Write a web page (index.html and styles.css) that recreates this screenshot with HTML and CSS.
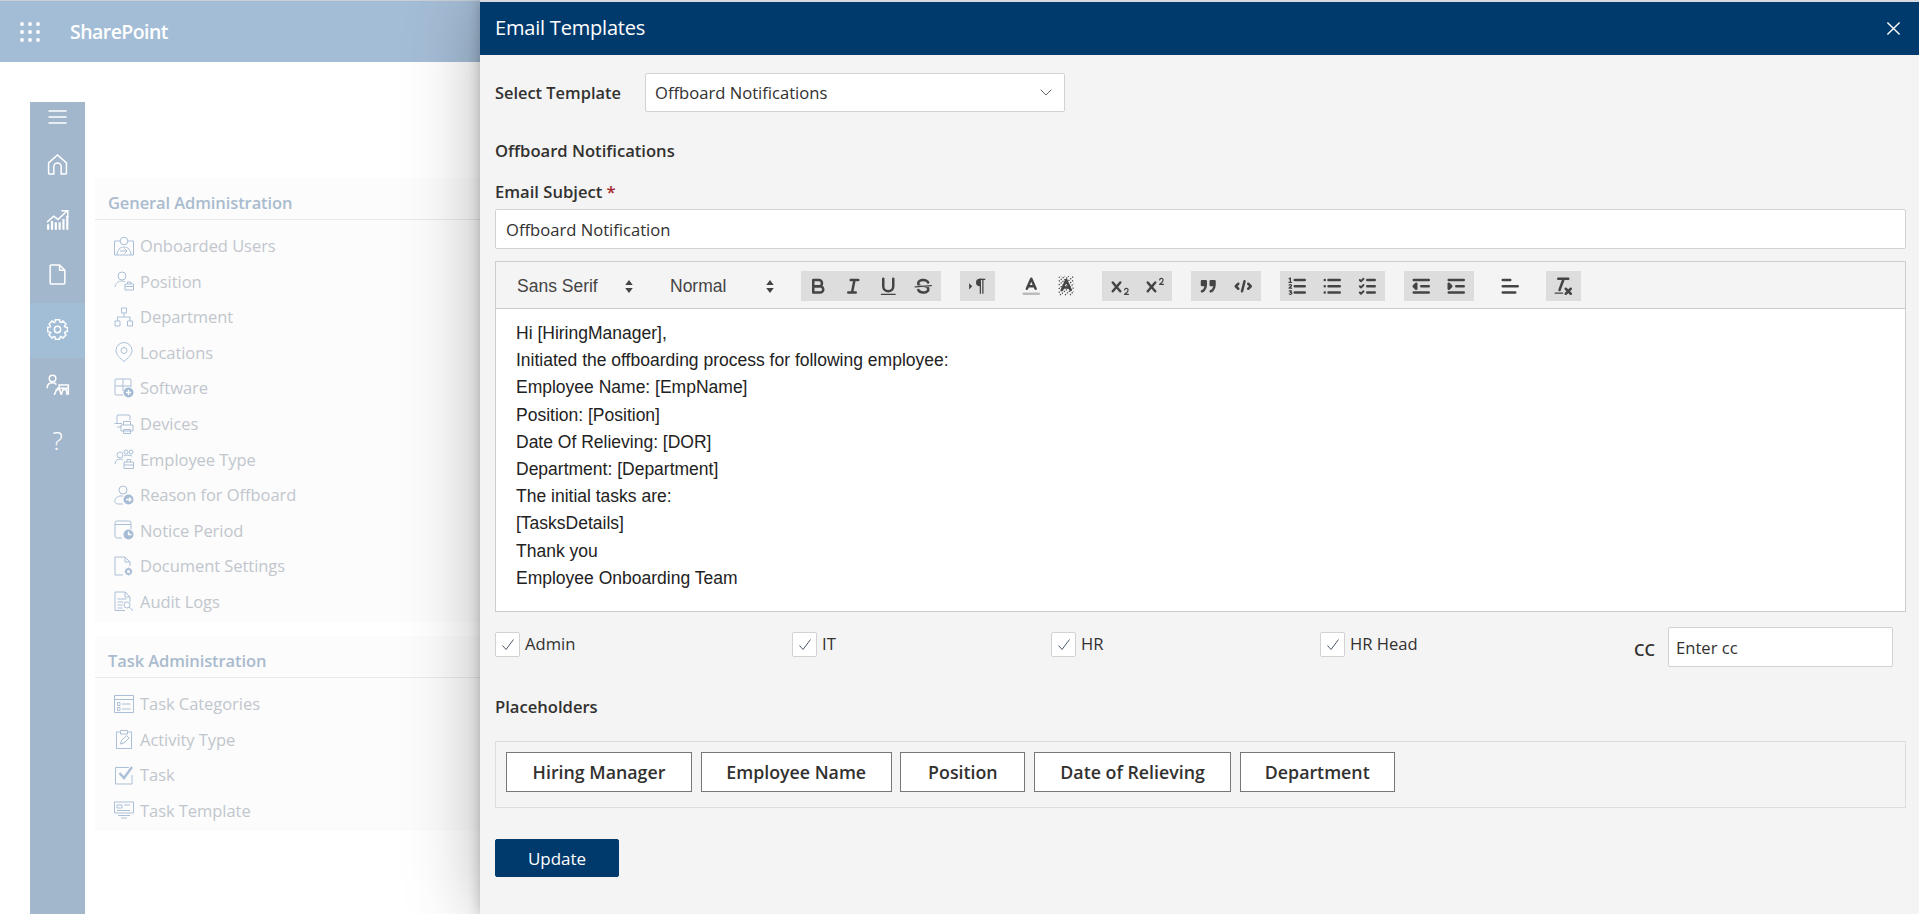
FILE: index.html
```html
<!DOCTYPE html>
<html lang="en">
<head>
    <meta charset="UTF-8">
    <title>Email Templates</title>
    <link rel="stylesheet" href="styles.css">
</head>
<body>
    <header id="topbar">
        <svg class="waffle" viewBox="0 0 20 20"><g fill="#fff"><circle cx="2" cy="2" r="1.9"/><circle cx="10" cy="2" r="1.9"/><circle cx="18" cy="2" r="1.9"/><circle cx="2" cy="10" r="1.9"/><circle cx="10" cy="10" r="1.9"/><circle cx="18" cy="10" r="1.9"/><circle cx="2" cy="18" r="1.9"/><circle cx="10" cy="18" r="1.9"/><circle cx="18" cy="18" r="1.9"/></g></svg>
        <span class="brand">SharePoint</span>
    </header>

    <div id="page">
        <!-- Barra lateral -->
        <nav id="sidebar">
            <div class="side-toggle"><svg viewBox="0 0 20 14"><path d="M1 1h18M1 7h18M1 13h18"/></svg></div>
            <a class="side-item"><svg viewBox="0 0 20 20"><path d="M1.500 18V8.500L10 1l8.500 7.500V18a1 1 0 0 1-1 1h-4V12a3.500 3.500 0 0 0-7 0v7h-4a1 1 0 0 1-1-1z"/></svg></a>
            <a class="side-item"><svg class="wide" viewBox="0 0 22 20"><path d="M1 12l6-5.500 4 3 8-7.500M14 1.500h6v6"/><path class="bars" d="M2 19v-5M5.500 19v-8M9 19v-7M12.500 19v-7M16 19V9M19.500 19V6"/></svg></a>
            <a class="side-item"><svg viewBox="0 0 20 20"><path d="M3 2a1 1 0 0 1 1-1h8l5 5v12a1 1 0 0 1-1 1H4a1 1 0 0 1-1-1zM12 1v5h5"/></svg></a>
            <a class="side-item active"><svg viewBox="0 0 20 20"><circle cx="10" cy="10" r="3"/><path d="M7.540 3.230 8 .610h4l.46 2.620A7.200 7.200 0 0 1 13.040 3.470"/><path transform="rotate(45 10 10)" d="M7.540 3.230 8 .610h4l.46 2.620A7.200 7.200 0 0 1 13.040 3.470"/><path transform="rotate(90 10 10)" d="M7.540 3.230 8 .610h4l.46 2.620A7.200 7.200 0 0 1 13.040 3.470"/><path transform="rotate(135 10 10)" d="M7.540 3.230 8 .610h4l.46 2.620A7.200 7.200 0 0 1 13.040 3.470"/><path transform="rotate(180 10 10)" d="M7.540 3.230 8 .610h4l.46 2.620A7.200 7.200 0 0 1 13.040 3.470"/><path transform="rotate(225 10 10)" d="M7.540 3.230 8 .610h4l.46 2.620A7.200 7.200 0 0 1 13.040 3.470"/><path transform="rotate(270 10 10)" d="M7.540 3.230 8 .610h4l.46 2.620A7.200 7.200 0 0 1 13.040 3.470"/><path transform="rotate(315 10 10)" d="M7.540 3.230 8 .610h4l.46 2.620A7.200 7.200 0 0 1 13.040 3.470"/></svg></a>
            <a class="side-item"><svg class="wide" viewBox="0 0 22 20"><circle cx="6" cy="4" r="3"/><path d="M1 13c0-3 2-5 5-5 1.500 0 2.500.5 3.500 1.500"/><path d="M7.500 19l1.500-3a2 2 0 0 1 4 0l1 3M14 19l1-3a2 2 0 0 1 4 0v3M10 13h10.500v6M12 13V10h8.500v3"/></svg></a>
            <a class="side-item help">?</a>
        </nav>

        <main id="admin">
            <section class="admin-card">
                <h3>General Administration</h3>
                <ul>
                    <li><svg viewBox="0 0 20 20"><path d="M6 5H.5v14h19V5H14M3 19c0-5 3-8 7-8s7 3 7 8"/><circle cx="10" cy="5" r="3.800"/><path d="M6 15h7m-2.500-2.500L13 15l-2.500 2.500"/></svg>Onboarded Users</li>
                    <li><svg viewBox="0 0 20 20"><circle cx="8" cy="5" r="4"/><path d="M1 16c1-4 3-6 7-6 1 0 2 .2 3 .7"/><path d="M11 13h8.500v6H11zM11 15.500h8.500M13.500 13v-2h3.500v2"/></svg>Position</li>
                    <li><svg viewBox="0 0 20 20"><path d="M7.500 1h5v5h-5zM1 14h5v5H1zM13.500 14h5v5h-5zM10 6v4M3.500 14v-4h12.500v4"/></svg>Department</li>
                    <li><svg viewBox="0 0 20 20"><path d="M10 19.500C6 16 2 13 2 8.500a8 8 0 0 1 16 0c0 4.500-4 7.500-8 11z"/><circle cx="10" cy="8.500" r="3"/></svg>Locations</li>
                    <li><svg viewBox="0 0 20 20"><path d="M9 17H2a1 1 0 0 1-1-1V2a1 1 0 0 1 1-1h14a1 1 0 0 1 1 1v7M1 8h16M9 1v12"/><circle class="solid" cx="14.500" cy="14.500" r="5"/><path class="cut" d="M14.500 12v5M12 14.500h5"/></svg>Software</li>
                    <li><svg viewBox="0 0 20 20"><path d="M3 10V2a1 1 0 0 1 1-1h11a1 1 0 0 1 1 1v4M.5 9.500H8M7 13H3M7 11h12v6H7zM9.500 11V7.500h7V11M9.500 15.500h7v4h-7z"/></svg>Devices</li>
                    <li><svg viewBox="0 0 20 20"><circle cx="6" cy="6" r="3"/><circle cx="12" cy="3" r="2"/><circle cx="17" cy="3" r="2"/><path d="M1 15c0-3 2-5 5-5 1 0 2 .3 3 1M10 7c1-1 6-1 8 0M10 13h9.500v6.500H10zM10 16h9.500M13 13v-2.500h3.500V13"/></svg>Employee Type</li>
                    <li><svg viewBox="0 0 20 20"><circle cx="9" cy="5" r="4"/><path d="M9 19H4c-5 0-4-7 2-8h3"/><circle class="solid" cx="14.500" cy="14.500" r="5"/><path class="cut" d="M12 14.500h5m-2-2 2 2-2 2"/></svg>Reason for Offboard</li>
                    <li><svg viewBox="0 0 20 20"><path d="M8 18H3a2 2 0 0 1-2-2V3a2 2 0 0 1 2-2h12a2 2 0 0 1 2 2v6M1 4.500h16"/><circle class="solid" cx="14.500" cy="14.500" r="5"/><path class="cut" d="M14.500 11.500v3h3"/></svg>Notice Period</li>
                    <li><svg viewBox="0 0 20 20"><path d="M9 19H1V1h10l5 5v4M11 1v5h5"/><circle cx="14.500" cy="15.500" r="2.500" stroke-width="2"/><path d="M14.500 11.500v1.500M14.500 18v1.500M10.500 15.500H12M17 15.500h1.500"/></svg>Document Settings</li>
                    <li><svg viewBox="0 0 20 20"><path d="M11 19.500H1V1h10l5 5v5M11 1v5h5M3.500 8h9M3.500 11h6M3.500 14h5M3.500 17h5"/><circle cx="13" cy="14" r="3"/><path d="M15.200 16.200l4 3.500"/></svg>Audit Logs</li>
                </ul>
            </section>

            <section class="admin-card second">
                <h3>Task Administration</h3>
                <ul>
                    <li><svg viewBox="0 0 20 20"><path d="M.5 1.500h19v17H.5zM.5 5.500h19M8 10h8.500M8 15h8.500M3.500 8.500h2.500v3H3.500zM3.500 13.500h2.500v3H3.500z"/></svg>Task Categories</li>
                    <li><svg viewBox="0 0 20 20"><path d="M6 3H2.500v16.500h15V3H14M6.500 1.500h7V5h-7zM6.500 15l1-3.500 5-5 2.500 2.500-5 5z"/></svg>Activity Type</li>
                    <li><svg viewBox="0 0 20 20"><path d="M18 10v9H1.500V2.500H15"/><path d="M5.500 8l4.500 5 8-11" stroke-width="2.400"/></svg>Task</li>
                    <li><svg viewBox="0 0 20 20"><path d="M.5 2h19v11H.5zM3 5h5v3H3zM10 5h6M3 10.500h13M4 15.500h12M7 18h6"/></svg>Task Template</li>
                </ul>
            </section>
        </main>
    </div>

    <!-- Panel de plantillas -->
    <aside id="panel">
        <div id="panelHeader">
            <h2>Email Templates</h2>
            <svg class="close" viewBox="0 0 16 16"><path d="M1.500 1.500l13 13M14.500 1.500l-13 13"/></svg>
        </div>

        <div id="panelBody">
            <div class="template-row">
                <label>Select Template</label>
                <div class="select">Offboard Notifications
                    <svg viewBox="0 0 12 7"><path d="M.7.7L6 6 11.300.7"/></svg>
                </div>
            </div>

            <h4 class="template-name">Offboard Notifications</h4>

            <label class="subject-label">Email Subject <span class="required">*</span></label>
            <input class="field" type="text" value="Offboard Notification">

            <div id="editor">
                <div id="toolbar">
                    <div class="picker first">Sans Serif<svg viewBox="0 0 10 16"><path d="M5 1l4 5.500H1zM5 15l4-5.500H1z"/></svg></div>
                    <div class="picker second">Normal<svg viewBox="0 0 10 16"><path d="M5 1l4 5.500H1zM5 15l4-5.500H1z"/></svg></div>

                    <div class="tool-group shaded">
                        <button><svg viewBox="0 0 18 18"><path d="M5,4H9.500A2.500,2.500,0,0,1,12,6.500v0A2.500,2.500,0,0,1,9.500,9H5V4Z"/><path d="M5,9h5.500A2.500,2.500,0,0,1,13,11.500v0A2.500,2.500,0,0,1,10.500,14H5V9Z"/></svg></button>
                        <button><svg viewBox="0 0 18 18"><path d="M7 4h6M5 14h6M8 14l2-10"/></svg></button>
                        <button><svg viewBox="0 0 18 18"><path d="M5,3V9a4.012,4.012,0,0,0,4,4H9a4.012,4.012,0,0,0,4-4V3"/><rect class="fill" height="1" rx=".5" width="12" x="3" y="15"/></svg></button>
                        <button><svg viewBox="0 0 18 18"><path class="thin" d="M15.500 8.500l-13 1"/><path class="fill" d="M9.007,8C6.542,7.791,6,7.519,6,6.500,6,5.792,7.283,5,9,5c1.571,0,2.765.679,2.969,1.309a1,1,0,0,0,1.900-.617C13.356,4.106,11.354,3,9,3,6.200,3,4,4.538,4,6.500a3.200,3.200,0,0,0,.5,1.843Z"/><path class="fill" d="M8.984,10C11.457,10.208,12,10.479,12,11.500c0,.708-1.283,1.500-3,1.500-1.571,0-2.765-.679-2.969-1.309a1,1,0,1,0-1.900.617C4.644,13.894,6.646,15,9,15c2.800,0,5-1.538,5-3.500a3.200,3.200,0,0,0-.5-1.843Z"/></svg></button>
                    </div>
                    <div class="tool-group shaded">
                        <button><svg viewBox="0 0 18 18"><path class="fill" d="M2.500 11.500l2.500-2.500-2.500-2.500zM11,3a3,3,0,0,0,0,6h1V3H11Z"/><rect class="fill" height="12" width="1" x="11" y="3"/><rect class="fill" height="12" width="1" x="13" y="3"/><path class="thin" d="M11 3.500h4"/></svg></button>
                    </div>
                    <div class="tool-group">
                        <button><svg viewBox="0 0 18 18"><path d="M3 15h12" stroke="#bbb"/><path d="M5.500 11L9 3l3.500 8M11.630 9H6.380"/></svg></button>
                        <button><svg viewBox="0 0 18 18"><path class="hatch" d="M3 2l2-1M3 5l5-4M3 8l8-7M3 11l12-10M3 14l12-10M4 16l11-9M8 16l7-6M12 16l3-3"/><path d="M5.500 12L9 4l3.500 8M11.630 10H6.380"/></svg></button>
                    </div>
                    <div class="tool-group shaded">
                        <button><svg viewBox="0 0 18 18"><path class="fill" d="M15.500,15H13.861a3.858,3.858,0,0,0,1.914-2.975,1.800,1.800,0,0,0-1.600-1.751A1.921,1.921,0,0,0,12.021,11.700a.5,.5,0,1,0,.957.291,.914,.914,0,0,1,1.053-.725,.81,.81,0,0,1,.744.762c0,1.076-1.170,1.870-1.940,2.431A1.456,1.456,0,0,0,12,15.500a.5,.5,0,0,0,.5.5h3A.5,.5,0,0,0,15.500,15Z"/><path class="fill" d="M9.650,5.241a1,1,0,0,0-1.409.108L6,7.964,3.759,5.349A1,1,0,0,0,2.241,6.649L4.684,9.500,2.241,12.350A1,1,0,0,0,3.759,13.650L6,11.036,8.241,13.650a1,1,0,1,0,1.518-1.300L7.316,9.500,9.759,6.651A1,1,0,0,0,9.650,5.241Z"/></svg></button>
                        <button><svg viewBox="0 0 18 18"><path class="fill" d="M15.500,7H13.861a4.015,4.015,0,0,0,1.914-2.975,1.800,1.800,0,0,0-1.600-1.751A1.922,1.922,0,0,0,12.021,3.700a.5,.5,0,1,0,.957.291,.917,.917,0,0,1,1.053-.725,.81,.81,0,0,1,.744.762c0,1.077-1.164,1.925-1.934,2.486A1.423,1.423,0,0,0,12,7.500a.5,.5,0,0,0,.5.5h3A.5,.5,0,0,0,15.500,7Z"/><path class="fill" d="M9.651,5.241a1,1,0,0,0-1.410.108L6,7.964,3.759,5.349a1,1,0,1,0-1.519,1.300L4.683,9.500,2.241,12.350a1,1,0,1,0,1.519,1.300L6,11.036,8.241,13.650a1,1,0,0,0,1.519-1.300L7.317,9.500,9.759,6.651A1,1,0,0,0,9.651,5.241Z"/></svg></button>
                    </div>
                    <div class="tool-group shaded">
                        <button><svg viewBox="0 0 18 18"><rect class="fill" height="3" width="3" x="4" y="5"/><rect class="fill" height="3" width="3" x="11" y="5"/><path d="M4 5h3v3H4zM11 5h3v3h-3zM7,8c0,4.031-3,5-3,5M14,8c0,4.031-3,5-3,5"/></svg></button>
                        <button><svg viewBox="0 0 18 18"><path d="M5 7L3 9l2 2M13 7l2 2-2 2M10 5L8 13"/></svg></button>
                    </div>
                    <div class="tool-group shaded">
                        <button><svg viewBox="0 0 18 18"><path d="M7 4h8M7 9h8M7 14h8"/><path class="thin" d="M2.500 3l1-.6v3.400M2.400 5.900h2M2.500 8c.6-.6 2-.4 1.900.5 0 .7-1.900 1.300-1.900 2h2M2.600 12.600h1.800l-1 1.200c1 0 1.400.4 1.200 1-.2.700-1.400.8-2 .3"/></svg></button>
                        <button><svg viewBox="0 0 18 18"><path d="M6 4h9M6 9h9M6 14h9M3 4h0M3 9h0M3 14h0"/></svg></button>
                        <button><svg viewBox="0 0 18 18"><path d="M9 4h6M9 9h6M9 14h6"/><path class="thin2" d="M3 4l1 1 2-2M3 9l1 1 2-2M3 14l1 1 2-2"/></svg></button>
                    </div>
                    <div class="tool-group shaded">
                        <button><svg viewBox="0 0 18 18"><path d="M3 14h12M3 4h12M9 9h6"/><path class="fill" d="M5 7v4L3 9z"/><path d="M5 7v4L3 9z"/></svg></button>
                        <button><svg viewBox="0 0 18 18"><path d="M3 14h12M3 4h12M9 9h6"/><path d="M3 7v4l2-2z"/><path class="fill" d="M3 7v4l2-2z"/></svg></button>
                    </div>
                    <div class="tool-group">
                        <button><svg viewBox="0 0 18 18"><path d="M3 9h12M3 14h10M3 4h6"/></svg></button>
                    </div>
                    <div class="tool-group shaded">
                        <button><svg viewBox="0 0 18 18"><path d="M5 3h8M6 12l3.350-9M11 11l4 4M15 11l-4 4"/><rect class="fill" height="1" rx=".5" width="7" x="2" y="14"/></svg></button>
                    </div>
                </div>
                <div id="content">
                    <p>Hi [HiringManager],</p>
                    <p>Initiated the offboarding process for following employee:</p>
                    <p>Employee Name: [EmpName]</p>
                    <p>Position: [Position]</p>
                    <p>Date Of Relieving: [DOR]</p>
                    <p>Department: [Department]</p>
                    <p>The initial tasks are:</p>
                    <p>[TasksDetails]</p>
                    <p>Thank you</p>
                    <p>Employee Onboarding Team</p>
                </div>
            </div>

            <div id="recipients">
                <div class="check"><span class="box"><svg viewBox="0 0 14 14"><path d="M1.500 7.500l3.500 4L12.500 1.500"/></svg></span>Admin</div>
                <div class="check"><span class="box"><svg viewBox="0 0 14 14"><path d="M1.500 7.500l3.500 4L12.500 1.500"/></svg></span>IT</div>
                <div class="check"><span class="box"><svg viewBox="0 0 14 14"><path d="M1.500 7.500l3.500 4L12.500 1.500"/></svg></span>HR</div>
                <div class="check"><span class="box"><svg viewBox="0 0 14 14"><path d="M1.500 7.500l3.500 4L12.500 1.500"/></svg></span>HR Head</div>
                <div class="cc">
                    <label>CC</label>
                    <input class="cc-input" type="text" value="Enter cc">
                </div>
            </div>

            <h4 class="placeholders-title">Placeholders</h4>
            <div id="placeholders">
                <button class="chip chip-1">Hiring Manager</button>
                <button class="chip chip-2">Employee Name</button>
                <button class="chip chip-3">Position</button>
                <button class="chip chip-4">Date of Relieving</button>
                <button class="chip chip-5">Department</button>
            </div>

            <button id="updateBtn">Update</button>
        </div>
    </aside>
</body>
</html>
```

FILE: styles.css
```css
body {
    margin: 0;
    height: 914px;
    overflow: hidden;
    position: relative;
    background-color: #ffffff;
    font-family: "Open Sans", "Noto Sans", sans-serif;
}

/* Barra superior */
#topbar {
    height: 61px;
    border-top: 1px solid #c9d0d8;
    background-color: #a4bdd6;
    display: flex;
    align-items: center;
    color: #ffffff;
}

.waffle {
    width: 20px;
    height: 20px;
    margin-left: 20px;
}

.brand {
    margin-left: 30px;
    font-size: 19.500px;
    font-weight: 600;
    letter-spacing: -0.55px;
}

#page {
    display: flex;
    height: 852px;
    padding-left: 30px;
}

/* Barra lateral */
#sidebar {
    width: 55px;
    margin-top: 40px;
    background-color: #a3b7cc;
}

.side-toggle {
    height: 36px;
    display: flex;
    justify-content: center;
    padding-top: 8px;
    box-sizing: border-box;
}

.side-toggle svg {
    width: 21px;
    height: 14px;
}

#sidebar svg {
    fill: none;
    stroke: #ffffff;
    stroke-width: 1.400;
}

#sidebar .bars {
    stroke-width: 2;
}

.side-item {
    height: 55px;
    box-sizing: border-box;
    padding-bottom: 2px;
    display: flex;
    align-items: center;
    justify-content: center;
}

.side-item svg {
    width: 21px;
    height: 21px;
}

.side-item svg.wide {
    width: 24px;
    height: 22px;
}

.side-item.active {
    background-color: #a2bdd6;
}

.side-item.help {
    color: #ffffff;
    font-size: 25px;
    font-weight: 300;
}

/* Tarjetas de administracion */
#admin {
    flex: 1;
    margin-left: 10px;
    padding-top: 116px;
}

.admin-card {
    background-color: #fcfcfc;
}

.admin-card.second {
    margin-top: 14px;
}

.admin-card h3 {
    margin: 0;
    height: 42px;
    box-sizing: border-box;
    padding: 14px 0 0 13px;
    border-bottom: 1px solid #e9e9e9;
    color: #a9bbce;
    font-size: 16.500px;
    font-weight: 600;
    line-height: 22px;
    letter-spacing: -0.1px;
}

.admin-card ul {
    list-style: none;
    margin: 0;
    padding: 8px 0 3px 19px;
}

.admin-card li {
    height: 35.550px;
    display: flex;
    align-items: center;
    gap: 6px;
    color: #c1c6cd;
    font-size: 16.500px;
    letter-spacing: -0.05px;
}

.admin-card li svg {
    width: 20px;
    height: 20px;
    fill: none;
    stroke: #abc0d7;
    stroke-width: 1;
}

.admin-card li .solid {
    fill: #a6bcd4;
    stroke: none;
}

.admin-card li .cut {
    stroke: #ffffff;
    stroke-width: 1.300;
}

/* Panel derecho */
#panel {
    position: absolute;
    top: 0;
    left: 480px;
    right: 0;
    bottom: 0;
    background-color: #f4f4f4;
    box-shadow: 0 0 70px rgba(0, 0, 0, 0.28), 0 0 12px rgba(0, 0, 0, 0.22);
}

#panelHeader {
    height: 53px;
    border-top: 2px solid #d6dade;
    background-color: #003a6c;
    display: flex;
    align-items: center;
    justify-content: space-between;
    padding: 0 18px 0 15px;
    color: #ffffff;
}

#panelHeader h2 {
    margin: 0 0 3px;
    font-size: 20px;
    font-weight: 400;
    letter-spacing: -0.2px;
}

.close {
    width: 15px;
    height: 15px;
    fill: none;
    stroke: #ffffff;
    stroke-width: 1.500;
}

#panelBody {
    padding: 18px 13px 0 15px;
    color: #323130;
    font-size: 16.500px;
}

.template-row {
    display: flex;
    align-items: center;
    height: 39px;
}

.template-row label {
    width: 150px;
    font-size: 16.400px;
    font-weight: 600;
    color: #323130;
}

.select {
    width: 420px;
    height: 39px;
    box-sizing: border-box;
    border: 1px solid #d2d2d2;
    border-radius: 2px;
    background-color: #ffffff;
    display: flex;
    align-items: center;
    justify-content: space-between;
    padding: 0 12px 0 9px;
    font-size: 16.600px;
}

.select svg {
    width: 12px;
    height: 7px;
    fill: none;
    stroke: #666666;
    stroke-width: 1;
}

.template-name {
    margin: 28px 0 0;
    height: 22px;
    line-height: 22px;
    font-size: 16.600px;
    font-weight: 600;
}

.subject-label {
    display: block;
    margin-top: 19px;
    height: 22px;
    line-height: 22px;
    font-size: 16.600px;
    font-weight: 600;
}

.required {
    color: #a4262c;
}

.field {
    display: block;
    width: 100%;
    height: 40px;
    margin-top: 6px;
    box-sizing: border-box;
    border: 1px solid #d2d2d2;
    border-radius: 2px;
    padding: 0 10px;
    background-color: #ffffff;
    color: #323130;
    font-family: inherit;
    font-size: 16.600px;
}

/* Editor */
#editor {
    margin-top: 12px;
    border: 1px solid #cccccc;
    font-family: "Liberation Sans", Arial, sans-serif;
}

#toolbar {
    height: 47px;
    box-sizing: border-box;
    padding-top: 2px;
    display: flex;
    align-items: center;
    border-bottom: 1px solid #cccccc;
}

.picker {
    display: flex;
    align-items: center;
    justify-content: space-between;
    box-sizing: border-box;
    padding-left: 21px;
    color: #444444;
    font-size: 17.500px;
}

.picker svg {
    width: 10px;
    height: 15px;
    fill: #444444;
}

.picker.first {
    width: 153px;
    padding-right: 15px;
}

.picker.second {
    width: 133px;
    margin-right: 19px;
    padding-right: 7px;
}

.tool-group {
    display: flex;
    margin-right: 18.750px;
}

.tool-group.shaded {
    background-color: #dddddd;
}

.tool-group button {
    width: 35px;
    height: 30px;
    padding: 0;
    border: none;
    background: none;
    display: flex;
    align-items: center;
    justify-content: center;
}

.tool-group svg {
    width: 22.500px;
    height: 22.500px;
    fill: none;
    stroke: #444444;
    stroke-width: 2;
    stroke-linecap: round;
    stroke-linejoin: round;
}

.tool-group .fill {
    fill: #444444;
    stroke: none;
}

.tool-group .thin {
    stroke-width: 1;
}

.tool-group .thin2 {
    stroke-width: 1.500;
}

.tool-group .hatch {
    stroke-width: 1;
    stroke-dasharray: 1 1;
    stroke-linecap: butt;
}

#content {
    height: 302px;
    box-sizing: border-box;
    padding: 11px 20px 0;
    background-color: #ffffff;
    color: #222222;
    font-size: 17.500px;
    line-height: 27.200px;
}

#content p {
    margin: 0;
}

/* Destinatarios */
#recipients {
    display: grid;
    grid-template-columns: 297px 259px 269px 314px 1fr;
    height: 40px;
    margin-top: 15px;
}

.check {
    display: flex;
    align-items: flex-start;
    padding-top: 5px;
    gap: 5px;
    font-size: 16.600px;
    line-height: 24px;
}

.box {
    width: 25px;
    height: 25px;
    box-sizing: border-box;
    border: 1px solid #d2d2d2;
    border-radius: 2px;
    background-color: #ffffff;
    display: flex;
    align-items: center;
    justify-content: center;
}

.box svg {
    width: 14px;
    height: 14px;
    fill: none;
    stroke: #4a5a6a;
    stroke-width: 1;
}

.cc {
    display: flex;
    align-items: center;
    font-weight: 600;
}

.cc label {
    width: 34px;
    padding-top: 4px;
}

.cc-input {
    width: 225px;
    height: 40px;
    box-sizing: border-box;
    border: 1px solid #d2d2d2;
    border-radius: 2px;
    padding: 0 7px;
    background-color: #ffffff;
    color: #323130;
    font-family: inherit;
    font-size: 16.600px;
}

/* Placeholders */
.placeholders-title {
    margin: 29px 0 0;
    height: 22px;
    line-height: 22px;
    font-size: 16.600px;
    font-weight: 600;
}

#placeholders {
    display: flex;
    gap: 8.700px;
    height: 67px;
    margin-top: 23px;
    box-sizing: border-box;
    border: 1px solid #dddddd;
    padding: 10px;
}

.chip {
    height: 40px;
    border: 1px solid #777777;
    background-color: #ffffff;
    color: #323130;
    font-family: inherit;
    font-size: 17.800px;
    font-weight: 600;
    padding: 0;
}

.chip-1 { width: 186px; }
.chip-2 { width: 191px; }
.chip-3 { width: 125px; }
.chip-4 { width: 197px; }
.chip-5 { width: 155px; }

#updateBtn {
    display: block;
    width: 124px;
    height: 38px;
    margin-top: 31px;
    border: 1px solid #003a6c;
    border-radius: 2px;
    background-color: #003a6c;
    color: #ffffff;
    font-family: inherit;
    font-size: 17px;
    padding: 0;
}
```
